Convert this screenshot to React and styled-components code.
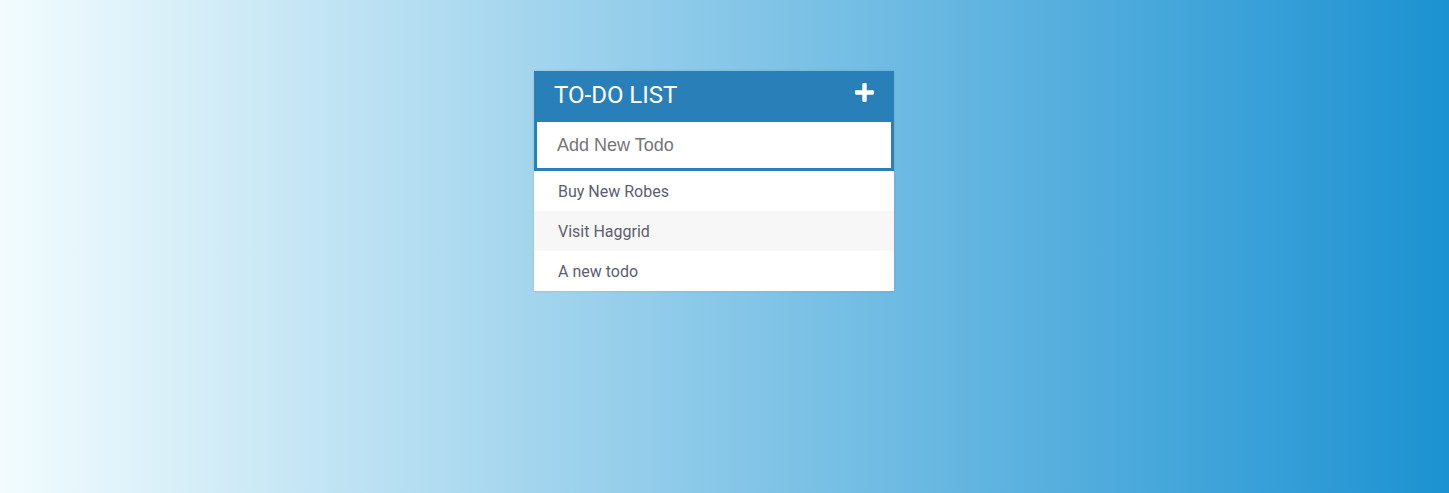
import React from 'react';
import styled, { createGlobalStyle } from 'styled-components';

const GlobalStyle = createGlobalStyle`
  html, body {
    margin: 0;
    padding: 0;
    height: 100%;
  }
  body {
    font-family: Roboto, "Liberation Sans", sans-serif;
    background: linear-gradient(to left, #1c92d2, #f2fcfe);
  }
`;

const Page = styled.div`
  min-height: 100vh;
  box-sizing: border-box;
  padding-top: 71px;
`;

const Container = styled.div`
  width: 360px;
  margin-left: calc(50% - 190.5px);
  background: #fff;
  box-shadow: 0 0 3px rgba(0, 0, 0, 0.1);
`;

const Header = styled.h1`
  display: flex;
  align-items: center;
  justify-content: space-between;
  box-sizing: border-box;
  height: 48px;
  margin: 0;
  padding: 0 20px;
  background: #2980b9;
  color: #fff;
  font-size: 24px;
  font-weight: 400;
  text-transform: uppercase;
`;

const Plus = styled.svg`
  margin-top: -5px;
`;

const Input = styled.input`
  display: block;
  width: 100%;
  height: 52px;
  box-sizing: border-box;
  padding: 0 13px 0 20px;
  font-family: "Liberation Sans", Arial, sans-serif;
  font-size: 18px;
  color: #2980b9;
  caret-color: #2980b9;
  background: #fff;
  border: 3px solid #2980b9;
  outline: none;
  &::placeholder {
    color: #757575;
  }
`;

const List = styled.ul`
  list-style: none;
  margin: 0;
  padding: 0;
`;

const Item = styled.li`
  box-sizing: border-box;
  height: 40px;
  padding: 2px 0 0 24px;
  line-height: 38px;
  font-size: 16px;
  color: #5e5e6e;
  background: ${(p) => (p.$alt ? '#f7f7f7' : '#fff')};
`;

const PlusIcon = () => (
  <Plus width="19" height="19" viewBox="0 0 19 19" aria-hidden="true">
    <path
      d="M7.3 1.2c0-.7.5-1.2 1.2-1.2h2c.7 0 1.2.5 1.2 1.2v6.1h6.1c.7 0 1.2.5 1.2 1.2v2c0 .7-.5 1.2-1.2 1.2h-6.1v6.1c0 .7-.5 1.2-1.2 1.2h-2c-.7 0-1.2-.5-1.2-1.2v-6.1H1.2C.5 11.7 0 11.2 0 10.5v-2c0-.7.5-1.2 1.2-1.2h6.1z"
      fill="#fff"
    />
  </Plus>
);

const todos = ['Buy New Robes', 'Visit Haggrid', 'A new todo'];

export default function App() {
  return (
    <>
      <GlobalStyle />
      <Page>
        <Container>
          <Header>
            To-Do List
            <PlusIcon />
          </Header>
          <Input type="text" placeholder="Add New Todo" autoFocus />
          <List>
            {todos.map((todo, i) => (
              <Item key={todo} $alt={i % 2 === 1}>
                {todo}
              </Item>
            ))}
          </List>
        </Container>
      </Page>
    </>
  );
}
